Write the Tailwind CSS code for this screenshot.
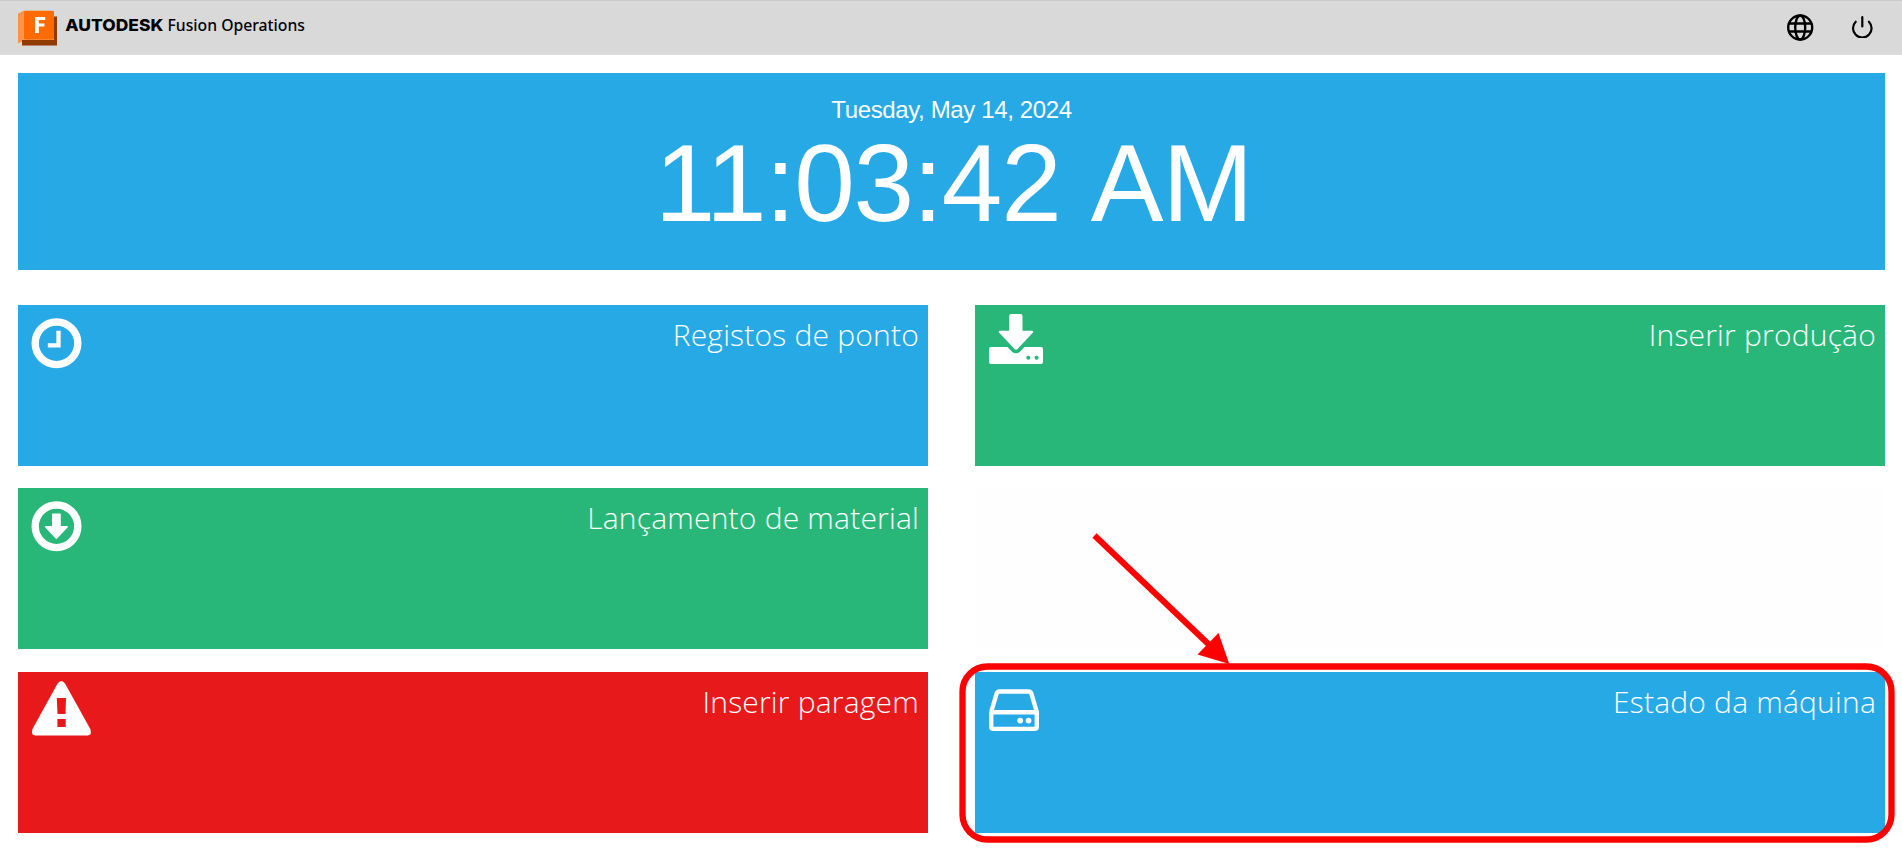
<!DOCTYPE html>
<html lang="pt">
<head>
<meta charset="utf-8">
<title>Autodesk Fusion Operations</title>
<script src="https://cdn.jsdelivr.net/npm/@tailwindcss/browser@4"></script>
</head>
<body class="relative h-screen overflow-hidden bg-white font-['Open_Sans',sans-serif]">
<header class="flex h-[55px] items-start justify-between border-t border-[#cccccc] bg-[#d9d9d9] pl-[18px]">
  <div class="flex">
    <svg class="mt-[9px] h-[36px] w-[39px]" viewBox="0 0 39 36">
      <path fill="#ff9248" d="M0 3.500L6.200 .500V30.500L0 33.500Z"/>
      <path fill="#923b00" d="M4 30H36V6.500H39V35.500H4Z"/>
      <rect x="6" y=".800" width="30" height="29" rx="1.300" fill="#ff6b00"/>
      <path fill="#fff" d="M17 7H27.200V10H20.800V13.500H26.400V16.500H20.800V23H17Z"/>
    </svg>
    <svg class="h-[54px] w-[260px]" viewBox="0 0 260 54">
      <text x="8.300" y="30" font-family="Inter, sans-serif" font-weight="800" font-size="16.500" textLength="98" lengthAdjust="spacingAndGlyphs">AUTODESK</text>
      <text x="110.500" y="30" font-family="'Noto Sans', sans-serif" font-weight="500" font-size="16.800" textLength="137.500" lengthAdjust="spacingAndGlyphs">Fusion Operations</text>
    </svg>
  </div>
  <div class="flex gap-[36px] pt-[13px] pr-[28px]">
    <svg class="size-[27px]" viewBox="0 0 27 27" fill="none" stroke="#000" stroke-width="2.400">
      <circle cx="13.200" cy="13.500" r="12"/><ellipse cx="13.200" cy="13.500" rx="5" ry="12"/><path d="M2 9.500H25M2 17.500H25"/>
    </svg>
    <svg class="size-[24px]" viewBox="0 0 24 24" fill="none" stroke="#000" stroke-width="2.200" stroke-linecap="round">
      <path d="M12.300 3.200V12.500M5.700 7.700A9.300 9.300 0 1 0 18.900 7.700"/>
    </svg>
  </div>
</header>
<main class="flex flex-col pt-[18px] pr-[17px] pl-[18px]">
  <section class="flex h-[197px] flex-col items-center bg-[#27a9e5] pt-[23px] font-['Liberation_Sans',sans-serif] text-white">
    <div class="text-[24px] leading-[28px] tracking-[-0.37px]">Tuesday, May 14, 2024</div>
    <div class="pl-[4px] text-[109px] leading-[118px]"><span class="tracking-[-1.3px]">11:03:42</span> <span class="tracking-[-1px]">AM</span></div>
  </section>
  <section class="mt-[35px] grid grid-cols-2 grid-rows-[161px_162px_161px] gap-x-[47px] gap-y-[22px] text-[30px] leading-[40px] font-light tracking-[0.2px] text-white">
    <div class="flex items-start justify-between bg-[#27a9e5] pt-[10px] pr-[9px]">
      <svg class="-mt-[10px] h-[70px] w-[80px]" viewBox="0 0 80 70"><circle cx="38.500" cy="38.300" r="21.300" fill="none" stroke="#fff" stroke-width="7.400"/><path d="M40.500 28V40.300H32" fill="none" stroke="#fff" stroke-width="4.300" stroke-linejoin="miter" stroke-linecap="square"/></svg>
      <span>Registos de ponto</span>
    </div>
    <div class="flex items-start justify-between bg-[#29b779] pt-[10px] pr-[9px]">
      <svg class="-mt-[10px] h-[70px] w-[80px]" viewBox="0 0 80 70" fill="#fff"><path d="M36 9H45.500Q47.500 9 47.500 11V25.700H56.500Q59.500 25.700 57.500 28L42.500 44Q41 45.500 39.500 44L24.500 28Q22.500 25.700 25.500 25.700H34.200V11Q34.200 9 36 9Z"/><path d="M16 42H32.500L37 46.700Q41 50 45 46.700L49.500 42H66Q68 42 68 44V57Q68 59 66 59H16Q14 59 14 57V44Q14 42 16 42Z"/><g fill="#29b779"><circle cx="53.300" cy="52.700" r="2"/><circle cx="61.600" cy="52.700" r="2"/></g></svg>
      <span>Inserir produção</span>
    </div>
    <div class="flex h-[161px] items-start justify-between bg-[#29b779] pt-[10px] pr-[9px]">
      <svg class="-mt-[10px] h-[70px] w-[80px]" viewBox="0 0 80 70"><circle cx="38.500" cy="38.300" r="21.300" fill="none" stroke="#fff" stroke-width="7.400"/><path fill="#fff" d="M34.800 25.500H42Q42.800 25.500 42.800 26.300V38H49Q50.800 38 49.500 39.500L39.200 50.500Q38.400 51.400 37.600 50.500L27.300 39.500Q26 38 27.800 38H34V26.300Q34 25.500 34.800 25.500Z"/></svg>
      <span>Lançamento de material</span>
    </div>
    <div class="h-[161px] bg-[#fefefe]"></div>
    <div class="flex items-start justify-between bg-[#e8191a] pt-[10px] pr-[9px]">
      <svg class="-mt-[10px] h-[70px] w-[80px]" viewBox="0 0 80 70"><path fill="#fff" d="M39.600 11.500Q43.300 6.500 47 11.500L72.300 57Q74.300 63.500 69.500 63.500H17.500Q12.500 63.500 14.500 57Z"/><path fill="#e8191a" d="M38.800 26H48L47.500 42H39.500ZM39.400 47H47.700V55H39.400Z"/></svg>
      <span>Inserir paragem</span>
    </div>
    <div class="flex items-start justify-between bg-[#27a9e5] pt-[10px] pr-[9px]">
      <svg class="-mt-[10px] h-[70px] w-[80px]" viewBox="0 0 80 70"><path d="M16.200 40V54.500Q16.200 56.900 18.600 56.900H59.400Q61.800 56.900 61.800 54.500V40L56.500 22Q55.700 19.500 53.500 19.500H24.500Q22.300 19.500 21.500 22L16.200 40M16.200 40.200H61.800" fill="none" stroke="#fff" stroke-width="4.400" stroke-linejoin="round"/><g fill="#fff"><circle cx="45.200" cy="48.600" r="2.900"/><circle cx="53.600" cy="48.600" r="2.900"/></g></svg>
      <span>Estado da máquina</span>
    </div>
  </section>
</main>
<svg class="pointer-events-none absolute inset-0 h-[854px] w-[1902px]" viewBox="0 0 1902 854">
  <rect x="962.500" y="666.500" width="929" height="173" rx="25" fill="none" stroke="#ff0000" stroke-width="6.300"/>
  <path d="M1094.500 535.500L1212 647.500" stroke="#ff0000" stroke-width="6"/>
  <path d="M1229.300 664L1197.500 654.500L1218.500 633Z" fill="#ff0000"/>
</svg>
</body>
</html>
